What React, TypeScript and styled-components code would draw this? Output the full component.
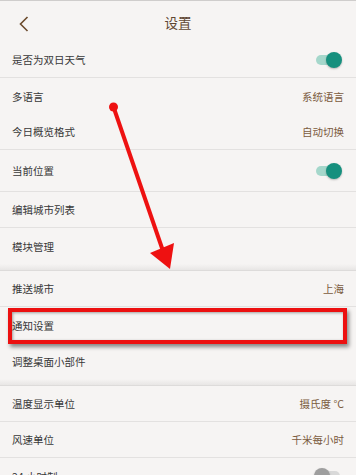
import styled, { createGlobalStyle } from "styled-components";

const GlobalStyle = createGlobalStyle`
  html, body {
    margin: 0;
    padding: 0;
    background: #f6f4f3;
  }
  body {
    font-family: "Noto Sans CJK SC", "Noto Sans", sans-serif;
  }
`;

const Page = styled.div`
  position: relative;
  width: 356px;
  height: 475px;
  overflow: hidden;
  background: #f6f4f3;
  border-top: 1px solid #cfcdcc;
  box-sizing: border-box;
`;

const Header = styled.div`
  height: 41px;
  display: flex;
  align-items: center;
  justify-content: center;
  position: relative;
`;

const BackButton = styled.button`
  position: absolute;
  left: 14px;
  top: 12px;
  width: 20px;
  height: 22px;
  padding: 0;
  border: none;
  background: none;
  display: flex;
  align-items: center;
  justify-content: center;
`;

const Title = styled.div`
  font-size: 13.5px;
  color: #5f4632;
`;

const Row = styled.div<{ height?: number; divider?: boolean }>`
  height: ${({ height }) => height ?? 36}px;
  display: flex;
  align-items: center;
  justify-content: space-between;
  padding: 0 12px;
  box-sizing: border-box;
  border-bottom: ${({ divider }) => (divider ? "1px solid #e3e1e0" : "none")};
`;

const Label = styled.span`
  font-size: 10.5px;
  color: #383838;
`;

const Value = styled.span`
  font-size: 10.5px;
  color: #7b5b3e;
`;

const GroupGap = styled.div`
  height: 6px;
  background: linear-gradient(#f6f4f3, #e8e6e5);
  border-bottom: 1px solid #dddbda;
`;

const Track = styled.div<{ on: boolean }>`
  position: relative;
  width: 24px;
  height: 10px;
  border-radius: 5px;
  margin-right: 4px;
  background: ${({ on }) => (on ? "#a5d7cb" : "#d9d9d9")};
`;

const Thumb = styled.div<{ on: boolean }>`
  position: absolute;
  top: -3px;
  left: ${({ on }) => (on ? "10px" : "-2px")};
  width: 16px;
  height: 16px;
  border-radius: 50%;
  background: ${({ on }) => (on ? "#16907e" : "#9e9e9e")};
  box-shadow: 0 1px 2px rgba(0, 0, 0, 0.25);
`;

const Overlay = styled.svg`
  position: absolute;
  left: 0;
  top: 0;
  pointer-events: none;
`;

const Highlight = styled.div`
  position: absolute;
  left: 8px;
  top: 307px;
  width: 339px;
  height: 36px;
  border: 4px solid #ec1010;
  box-sizing: border-box;
  box-shadow: 2px 3px 4px rgba(0, 0, 0, 0.45), inset 1px 1px 3px rgba(0, 0, 0, 0.35);
`;

const Toggle = ({ on }: { on: boolean }) => (
  <Track on={on}>
    <Thumb on={on} />
  </Track>
);

export default function App() {
  return (
    <Page>
      <GlobalStyle />
      <Header>
        <BackButton>
          <svg width="12" height="18" viewBox="0 0 12 18">
            <path d="M9.5 2 L2.5 9 L9.5 16" fill="none" stroke="#6b4a2c" strokeWidth="1.6" />
          </svg>
        </BackButton>
        <Title>设置</Title>
      </Header>

      <Row divider>
        <Label>是否为双日天气</Label>
        <Toggle on />
      </Row>
      <Row>
        <Label>多语言</Label>
        <Value>系统语言</Value>
      </Row>
      <Row divider>
        <Label>今日概览格式</Label>
        <Value>自动切换</Value>
      </Row>
      <Row divider height={42}>
        <Label>当前位置</Label>
        <Toggle on />
      </Row>
      <Row divider>
        <Label>编辑城市列表</Label>
      </Row>
      <Row>
        <Label>模块管理</Label>
      </Row>
      <GroupGap />

      <Row divider>
        <Label>推送城市</Label>
        <Value>上海</Value>
      </Row>
      <Row>
        <Label>通知设置</Label>
      </Row>
      <Row>
        <Label>调整桌面小部件</Label>
      </Row>
      <GroupGap />

      <Row divider>
        <Label>温度显示单位</Label>
        <Value>摄氏度 °C</Value>
      </Row>
      <Row divider>
        <Label>风速单位</Label>
        <Value>千米每小时</Value>
      </Row>
      <Row>
        <Label>24 小时制</Label>
        <Toggle on={false} />
      </Row>

      <Highlight />
      <Overlay width="356" height="475" viewBox="0 0 356 475">
        <circle cx="113.5" cy="106" r="4.5" fill="#ee1111" />
        <line x1="113.5" y1="106" x2="163" y2="250" stroke="#ee1111" strokeWidth="4" />
        <polygon points="150,252 174,242 170,268" fill="#ee1111" />
      </Overlay>
    </Page>
  );
}
